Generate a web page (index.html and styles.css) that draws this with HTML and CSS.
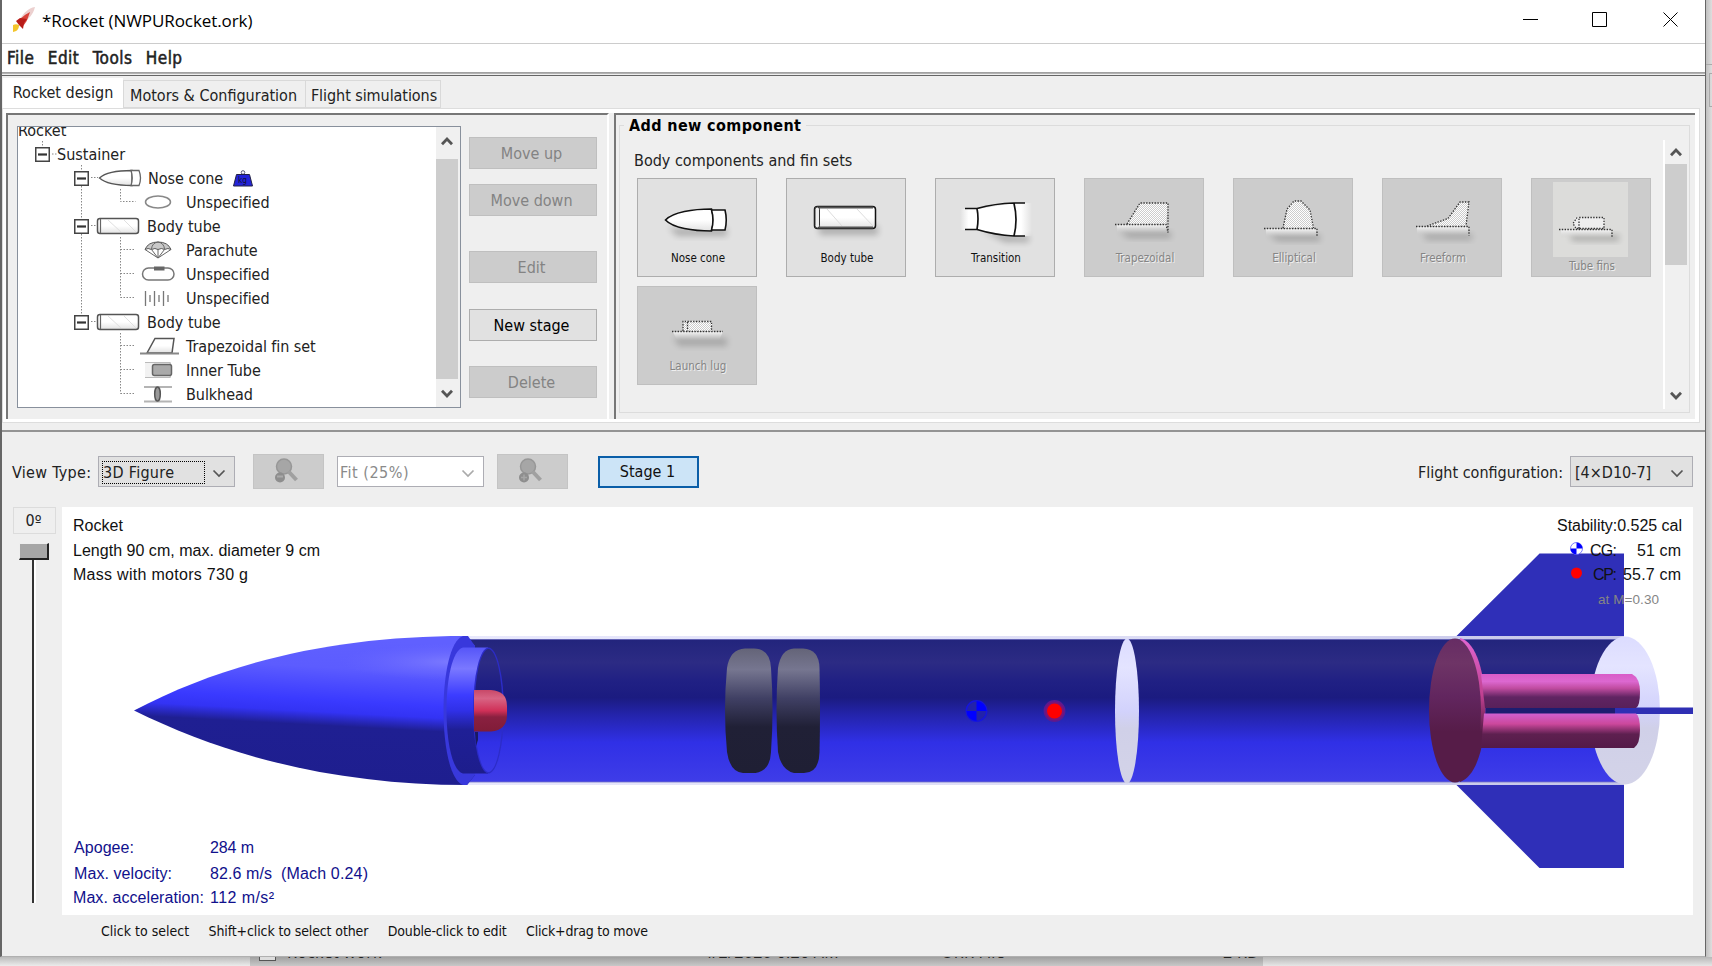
FILE: index.html
```html
<!DOCTYPE html>
<html lang="en">
<head>
<meta charset="utf-8">
<title>*Rocket (NWPURocket.ork)</title>
<link rel="stylesheet" href="styles.css">
</head>
<body>
<svg class="defs" width="0" height="0">
  <defs>
    <linearGradient id="metal" x1="0" y1="0" x2="0" y2="1"><stop offset="0" stop-color="#fff"/><stop offset=".5" stop-color="#fff"/><stop offset="1" stop-color="#e2e2e2"/></linearGradient>
    <pattern id="dither" width="2" height="2" patternUnits="userSpaceOnUse"><rect width="2" height="2" fill="#cccccc"/><rect width="1" height="1" fill="#fff"/><rect x="1" y="1" width="1" height="1" fill="#fff"/></pattern>
    <linearGradient id="base" x1="0" y1="0" x2="0" y2="1"><stop offset="0" stop-color="#f4f4f4"/><stop offset="1" stop-color="#ccc" stop-opacity="0"/></linearGradient>
    <linearGradient id="edgeFade" x1="0" y1="0" x2="1" y2="0"><stop offset="0" stop-color="#fff" stop-opacity="0"/><stop offset=".12" stop-color="#fff"/><stop offset=".85" stop-color="#fff"/><stop offset="1" stop-color="#fff" stop-opacity="0"/></linearGradient>
    <filter id="soft" x="-30%" y="-60%" width="160%" height="220%"><feGaussianBlur stdDeviation="3"/></filter>
    <symbol id="tube" viewBox="0 0 44 18"><rect x="1.500" y="1.500" width="41" height="15" rx="2.500" fill="url(#metal)" stroke="#555" stroke-width="1.500"/><path d="M12 3l13 12M28 3l12 12" stroke="#e0e0e0" fill="none"/><path d="M4.500 2v14" fill="none" stroke="#666" stroke-width="1.200"/></symbol>
    <symbol id="minus" viewBox="0 0 15 15"><rect x=".75" y=".75" width="13.500" height="13.500" fill="#fff" stroke="#444" stroke-width="1.500"/><path d="M3 7.500h9" stroke="#333" stroke-width="2.200"/></symbol>
    <symbol id="up" viewBox="0 0 12 10"><path d="M1 8.200L6 3l5 5.200" fill="none" stroke="#555" stroke-width="2.800"/></symbol>
    <symbol id="down" viewBox="0 0 12 10"><path d="M1 1.800L6 7l5-5.200" fill="none" stroke="#555" stroke-width="2.800"/></symbol>
    <symbol id="chev" viewBox="0 0 14 9"><path d="M1.500 1.500L7 7l5.500-5.500" fill="none" stroke="currentColor" stroke-width="1.700"/></symbol>
  </defs>
</svg>

<div class="desktop">
<div class="top">
<div class="window">
  <header class="titlebar">
    <svg class="app-icon" width="24" height="26" viewBox="0 0 24 26">
      <path d="M23 0C16 1 12 6 8 12l4 4c5-5 9-8 11-16z" fill="#ecd0cf"/><path d="M18 5C12 8 9 11 6 15l4 5c4-4 5-6 8-15z" fill="#d8433a"/><path d="M8 11l-4 3 3 4 4 4 1-6 3-4z" fill="#b81c18"/><path d="M1 18c2-1 4-1 6 0 0 3-1 6-6 7z" fill="#f3c52c"/>
    </svg>
    <span class="title">*Rocket (NWPURocket.ork)</span>
    <svg class="wincontrols" width="156" height="16" viewBox="0 0 156 16"><path d="M0 7.500h15M69.500 .5h14v14h-14zM140.500 .5l14 14M154.500 .5l-14 14" fill="none" stroke="#000"/></svg>
  </header>
  <nav class="menubar"><span>File</span><span>Edit</span><span>Tools</span><span>Help</span></nav>

  <section class="upper">
    <div class="tabs"><span class="tab active">Rocket design</span><span class="tab t2">Motors &amp; Configuration</span><span class="tab t3">Flight simulations</span></div>
    <div class="design">
      <div class="pane left">
        <div class="tree">
          <svg class="lines" width="120" height="280" viewBox="0 0 120 280"><path d="M23.500 14v6M33 27h6M62.500 38v5M62.500 59v32M62.500 107v80M72 50.500h7M72 98.500h7M72 194.500h7M101.500 62v12.500h15M101.500 110v60.500M101.500 122.500h15M101.500 146.500h15M101.500 170.500h15M101.500 206v60.500M101.500 218.500h15M101.500 242.500h15M101.500 266.500h15" fill="none" stroke="#888" stroke-dasharray="1.500 1.500"/></svg>
          <div class="rows">
            <div class="row r0">Rocket</div>
            <div class="row r1"><svg width="15" height="15"><use href="#minus"/></svg><span>Sustainer</span></div>
            <div class="row r2"><svg width="15" height="15"><use href="#minus"/></svg><svg class="bic" width="44" height="18" viewBox="0 0 44 18"><path d="M1.500 9C8 3 20 1.500 34 1.500v15C20 16.500 8 15 1.500 9z" fill="url(#metal)" stroke="#555" stroke-width="1.400"/><path d="M33 1.500q2.500 7.500 0 15h8q3-7.500 0-15z" fill="#fff" stroke="#666" stroke-width="1.300"/></svg><span>Nose cone</span>
              <svg class="kg" width="20" height="17" viewBox="0 0 20 17"><circle cx="10" cy="2.500" r="1.800" fill="none" stroke="#557"/><path d="M3.500 4.500h13l3 11.500H.5z" fill="#2424d8" stroke="#224"/><text x="5" y="13" class="kgt">kg</text></svg></div>
            <div class="row leaf"><svg width="42" height="18" viewBox="0 0 42 18"><ellipse cx="18" cy="9" rx="12.500" ry="6" fill="#fff" stroke="#888" stroke-width="1.500"/></svg><span>Unspecified</span></div>
            <div class="row r2 bt"><svg width="15" height="15"><use href="#minus"/></svg><svg class="bic" width="44" height="18"><use href="#tube"/></svg><span>Body tube</span></div>
            <div class="row leaf"><svg width="42" height="18" viewBox="0 0 42 18"><path d="M5 8.500Q8 1 18 1t13 7.500q-3-2-6.500 0-3-2-6.500 0-3-2-6.500 0Q8 6.500 5 8.500z" fill="#c8c8c8" stroke="#555"/><path d="M5 8.500l13 8.500 13-8.500M11.500 8.500L18 17l6.500-8.500M18 8.500V17M11.500 8Q12 2 18 1q6 1 6.500 7" fill="none" stroke="#666"/></svg><span>Parachute</span></div>
            <div class="row leaf"><svg width="42" height="18" viewBox="0 0 42 18"><rect x="2.500" y="3" width="31.500" height="12" rx="6" fill="#fff" stroke="#777" stroke-width="1.500"/><rect x="14" y="1.500" width="10.500" height="4" fill="#666"/></svg><span>Unspecified</span></div>
            <div class="row leaf"><svg width="42" height="18" viewBox="0 0 42 18"><path d="M5.500 2v15M14.500 2v15M23.500 2v15M10 6v7M19 6v7M28 6v7" stroke="#777" stroke-width="1.300"/></svg><span>Unspecified</span></div>
            <div class="row r2 bt"><svg width="15" height="15"><use href="#minus"/></svg><svg class="bic" width="44" height="18"><use href="#tube"/></svg><span>Body tube</span></div>
            <div class="row leaf"><svg width="42" height="18" viewBox="0 0 42 18"><path d="M7 16L15 1.500h19L32 16z" fill="url(#metal)" stroke="#555" stroke-width="1.500"/><path d="M0 16.500h39" stroke="#888" stroke-width="1.800"/></svg><span>Trapezoidal fin set</span></div>
            <div class="row leaf"><svg width="42" height="18" viewBox="0 0 42 18"><path d="M5 1.500h25q3 7.500 0 15H5" fill="#f2f2f2" stroke="#bbb" stroke-width="1.200"/><rect x="12.500" y="3.500" width="19" height="11" rx="2" fill="#aaa" stroke="#666" stroke-width="1.500"/></svg><span>Inner Tube</span></div>
            <div class="row leaf"><svg width="42" height="18" viewBox="0 0 42 18"><path d="M4 2h28M4 16.500h28" stroke="#b4b4b4" stroke-width="1.800"/><ellipse cx="17.500" cy="9" rx="2.800" ry="7" fill="#999" stroke="#555" stroke-width="1.500"/></svg><span>Bulkhead</span></div>
          </div>
          <div class="scroll"><svg width="12" height="10"><use href="#up"/></svg><i></i><svg width="12" height="10"><use href="#down"/></svg></div>
        </div>
        <div class="btns"><button class="btn off b1">Move up</button><button class="btn off b2">Move down</button><button class="btn off b3">Edit</button><button class="btn b4">New stage</button><button class="btn off b5">Delete</button></div>
      </div>
      <div class="pane right">
        <div class="group">
          <span class="legend">Add new component</span>
          <div class="components">
            <p class="subhead">Body components and fin sets</p>
            <div class="cards">
              <div class="card"><svg width="118" height="70" viewBox="1 1 118 70"><path d="M32 50h58v8H40z" fill="#000" opacity=".22" filter="url(#soft)"/><path d="M28.500 42C36 34 56 31 74.500 31q3.500 11 0 22C56 53 36 50 28.500 42z" fill="url(#metal)" stroke="#111" stroke-width="1.600"/><path d="M74.500 32h13.500q2.500 10 0 20H74.500q3-10 0-20z" fill="#fff" stroke="#111" stroke-width="1.600"/></svg><span>Nose cone</span></div>
              <div class="card"><svg width="118" height="70" viewBox="1 1 118 70"><path d="M32 48h60v9H34z" fill="#000" opacity=".22" filter="url(#soft)"/><rect x="28.500" y="28.500" width="61" height="22" rx="3" fill="url(#metal)" stroke="#111" stroke-width="1.500"/><path d="M31 29.500h56M31 49.500h56" stroke="#555" stroke-width="2"/><rect x="29" y="29" width="4.500" height="21" rx="2.200" fill="#eee" stroke="#333"/><path d="M41 31l15 17M71 31l16 17" stroke="#ddd"/></svg><span>Body tube</span></div>
              <div class="card"><svg width="118" height="70" viewBox="1 1 118 70"><path d="M46 52l34 6h14v6H70z" fill="#000" opacity=".24" filter="url(#soft)"/><path d="M25 31h18l36-6h18v33H79l-36-6H25z" fill="url(#edgeFade)"/><path d="M30 30.500h12Q60 25.500 79 25h11M30 51.500h12Q60 57 79 58h11M42 30.500q2 10 0 21M79 25.500q4 16 0 32.500" fill="none" stroke="#111" stroke-width="1.700"/></svg><span>Transition</span></div>
              <div class="card dis"><svg width="118" height="70" viewBox="1 1 118 70"><path d="M35 54h52v6H45z" fill="#000" opacity=".2" filter="url(#soft)"/><path d="M33 47h50v8H33z" fill="url(#base)"/><path d="M43 46L56 25h28l-2 21z" fill="url(#dither)"/><path d="M31 46.500h51l2 8V25H56L43 46" class="dots"/></svg><span>Trapezoidal</span></div>
              <div class="card dis"><svg width="118" height="70" viewBox="1 1 118 70"><path d="M35 57h52v6H45z" fill="#000" opacity=".2" filter="url(#soft)"/><path d="M33 51h50v8H33z" fill="url(#base)"/><path d="M50 50l4-19 7-8h7l9 9 3.500 18z" fill="url(#dither)"/><path d="M31 50.500h53v8M50 50l4-19 7-8h7l9 9 3.500 18" class="dots"/></svg><span>Elliptical</span></div>
              <div class="card dis"><svg width="118" height="70" viewBox="1 1 118 70"><path d="M40 56h50v6H45z" fill="#000" opacity=".18" filter="url(#soft)"/><path d="M35 49h51v8H35z" fill="url(#base)"/><path d="M45 48l21-7.500L78 24h10l-4 24z" fill="url(#dither)"/><path d="M34 48.500h53v9M45 48l21-7.500L78 24h9l-3 24" class="dots"/></svg><span>Freeform</span></div>
              <div class="card dis low"><svg width="118" height="78" viewBox="1 1 118 78"><rect x="22" y="4" width="75" height="75" fill="#dcdcda"/><path d="M38 57h50v6H42z" fill="#000" opacity=".22" filter="url(#soft)"/><path d="M30 52h50v8H30z" fill="url(#base)"/><rect x="43" y="39.500" width="30" height="11" rx="2" fill="#eee"/><path d="M28 51.500h53v8M48 50.500V39.500h25v11H45l-3-5 4-6" class="dots"/></svg><span>Tube fins</span></div>
              <div class="card dis"><svg width="118" height="70" viewBox="1 1 118 70"><path d="M36 52h54v8H42z" fill="#000" opacity=".18" filter="url(#soft)"/><path d="M36 46h50l-4 8H40z" fill="url(#base)"/><rect x="46" y="35" width="29" height="10" fill="url(#dither)"/><path d="M35 45.500h51M46 45V35.500h28.500V45M50.500 36v9" class="dots"/></svg><span>Launch lug</span></div>
            </div>
          </div>
          <div class="scroll s2"><svg width="12" height="10"><use href="#up"/></svg><i></i><svg width="12" height="10"><use href="#down"/></svg></div>
        </div>
      </div>
    </div>
  </section>

  <section class="lower">
    <div class="controls">
      <label class="vt">View Type:</label>
      <div class="combo c1"><span class="focus">3D Figure</span><svg width="14" height="9"><use href="#chev"/></svg></div>
      <div class="zoom z1"><svg width="26" height="25" viewBox="0 0 26 25"><circle cx="10" cy="8.500" r="7.500" fill="#a6a6a6" stroke="#979797" stroke-width="1.500"/><path d="M14.500 13.500l8 8.500" stroke="#a0a0a0" stroke-width="4"/><circle cx="6" cy="19.500" r="5" fill="#8e8e8e"/><path d="M3 18.500h6" stroke="#aaa" stroke-width="2"/></svg></div>
      <div class="combo c2"><span>Fit (25%)</span><svg width="14" height="9"><use href="#chev"/></svg></div>
      <div class="zoom z2"><svg width="26" height="25" viewBox="0 0 26 25"><circle cx="10" cy="8.500" r="7.500" fill="#a6a6a6" stroke="#979797" stroke-width="1.500"/><path d="M14.500 13.500l8 8.500" stroke="#a0a0a0" stroke-width="4"/><circle cx="6" cy="19.500" r="5" fill="#8e8e8e"/><path d="M3 19.500h6M6 16.500v6" stroke="#a6a6a6" stroke-width="1.500"/></svg></div>
      <button class="stage">Stage 1</button>
      <label class="fc">Flight configuration:</label>
      <div class="combo c3"><span>[4×D10-7]</span><svg width="14" height="9"><use href="#chev"/></svg></div>
    </div>
    <div class="view">
      <div class="slider"><span class="deg">0º</span><div class="knob"></div><div class="track"></div></div>
      <svg class="canvas" width="1631" height="408" viewBox="62 507 1631 408">
        <defs>
          <linearGradient id="body" gradientUnits="userSpaceOnUse" x1="0" y1="638" x2="0" y2="783"><stop offset="0" stop-color="#22247c"/><stop offset=".17" stop-color="#2c2b84"/><stop offset=".3" stop-color="#202084"/><stop offset=".41" stop-color="#1b1b80"/><stop offset=".52" stop-color="#2323a8"/><stop offset=".72" stop-color="#3030e6"/><stop offset="1" stop-color="#3f3de8"/></linearGradient>
          <linearGradient id="nose" gradientUnits="userSpaceOnUse" x1="300" y1="636" x2="292" y2="785"><stop offset="0" stop-color="#6060ff"/><stop offset=".2" stop-color="#5c5cff"/><stop offset=".42" stop-color="#3a3aff"/><stop offset=".5" stop-color="#3333f4"/><stop offset=".59" stop-color="#1f1f92"/><stop offset="1" stop-color="#1e1e8e"/></linearGradient>
          <linearGradient id="cyl" gradientUnits="userSpaceOnUse" x1="0" y1="647" x2="0" y2="774"><stop offset="0" stop-color="#5555f8"/><stop offset=".17" stop-color="#7a78ff"/><stop offset=".38" stop-color="#3c3cff"/><stop offset=".5" stop-color="#3030e8"/><stop offset=".65" stop-color="#1f1f96"/><stop offset="1" stop-color="#1d1d8c"/></linearGradient>
          <radialGradient id="shine" gradientUnits="userSpaceOnUse" cx="455" cy="662" r="115" gradientTransform="translate(0 556) scale(1 .16)"><stop offset="0" stop-color="#8280ff" stop-opacity=".85"/><stop offset="1" stop-color="#6a68ff" stop-opacity="0"/></radialGradient>
          <linearGradient id="red" x1="0" y1="0" x2="0" y2="1"><stop offset="0" stop-color="#c84868"/><stop offset=".2" stop-color="#d86484"/><stop offset=".5" stop-color="#d03058"/><stop offset=".65" stop-color="#8a2040"/><stop offset="1" stop-color="#801c38"/></linearGradient>
          <linearGradient id="pack" x1="0" y1="0" x2="0" y2="1"><stop offset="0" stop-color="#646478"/><stop offset=".17" stop-color="#767690"/><stop offset=".4" stop-color="#404064"/><stop offset=".63" stop-color="#202036"/><stop offset="1" stop-color="#1f1f34"/></linearGradient>
          <linearGradient id="white" x1="0" y1="0" x2="0" y2="1"><stop offset="0" stop-color="#dcdcff"/><stop offset=".2" stop-color="#e4e4ff"/><stop offset=".5" stop-color="#d2d2fc"/><stop offset=".62" stop-color="#d0d0e8"/><stop offset="1" stop-color="#d3d3e8"/></linearGradient>
          <linearGradient id="disc" x1="0" y1="0" x2="0" y2="1"><stop offset="0" stop-color="#662c64"/><stop offset=".17" stop-color="#6e3466"/><stop offset=".4" stop-color="#62265f"/><stop offset=".65" stop-color="#561c48"/><stop offset="1" stop-color="#561c48"/></linearGradient>
          <linearGradient id="motor1" x1="0" y1="0" x2="0" y2="1"><stop offset="0" stop-color="#d85cc8"/><stop offset=".22" stop-color="#dc68d0"/><stop offset=".42" stop-color="#c04ca0"/><stop offset=".68" stop-color="#602462"/><stop offset="1" stop-color="#58205a"/></linearGradient>
          <linearGradient id="motor2" x1="0" y1="0" x2="0" y2="1"><stop offset="0" stop-color="#d060d0"/><stop offset=".3" stop-color="#cc489c"/><stop offset=".6" stop-color="#5e2050"/><stop offset="1" stop-color="#541a48"/></linearGradient>
          <linearGradient id="rim" x1="0" y1="0" x2="0" y2="1"><stop offset="0" stop-color="#e066d0"/><stop offset=".4" stop-color="#c04090"/><stop offset=".65" stop-color="#561c48"/></linearGradient>
          <linearGradient id="edge" x1="0" y1="0" x2="1" y2="0"><stop offset="0" stop-color="#e8e8fc"/><stop offset=".6" stop-color="#dcdcf4"/><stop offset="1" stop-color="#c4c4e8"/></linearGradient>
        </defs>
        <path d="M1455 637.500L1539.500 553.500H1624V637zM1455 783.500L1539.500 868H1624V784z" fill="#2f2fb8"/>
        <rect x="466" y="636" width="1158" height="3.500" fill="url(#edge)"/>
        <rect x="466" y="781.500" width="1158" height="3.500" fill="url(#edge)"/>
        <rect x="466" y="639" width="1158" height="143" fill="url(#body)"/>
        <path d="M466 639.500H1624M466 782H1624" stroke="#7474c4" stroke-width=".8"/>
        <ellipse cx="1625" cy="710.500" rx="35" ry="74" fill="url(#white)"/>
        <path d="M134 710.500C230 660 340 636 465 636L475 646V775L467 785C340 785 230 758 134 710.500z" fill="url(#nose)"/>
        <path d="M330 646Q400 638 463 638L450 690H330z" fill="url(#shine)"/>
        <path d="M463 636C437 645 437 776 463 785H467L475 775V646L468 636z" fill="#3838dc"/>
        <path d="M463 647.500H488V773.500H463C441 768 441 653 463 647.500z" fill="url(#cyl)"/>
        <ellipse cx="488.500" cy="710.500" rx="15.500" ry="63" fill="#2c2cc8"/>
        <ellipse cx="488.500" cy="710.500" rx="14" ry="61.500" fill="url(#body)"/>
        <path d="M474 690h17q16 1 16 16v9q0 15-16 16.500h-17z" fill="url(#red)"/>
        <path d="M475 732h3v8l-2 6z" fill="#1a1a60"/>
        <path d="M727 668Q730 649 745 648.500h9Q770 649 771 668Q774 710 771 752Q770 773 752 773h-9Q730 772 727 752Q723 710 727 668z" fill="url(#pack)"/>
        <path d="M778 668Q781 649 794 648.500h9Q819 649 819.500 668Q820.500 710 819.500 752Q819 773 804 773h-10Q781 770 778 752Q775 710 778 668z" fill="url(#pack)"/>
        <circle cx="976.500" cy="711" r="10.200" fill="#2222aa" stroke="#1616dc" stroke-width="1.500"/><path d="M976.500 711V701a10 10 0 0 1 10 10zM976.500 711V721a10 10 0 0 1-10-10z" fill="#0000ff"/>
        <circle cx="1054.500" cy="711" r="10.200" fill="#7a1478" stroke="#5c1a90" stroke-width="1.500"/><circle cx="1054.500" cy="711" r="7.500" fill="#f00"/>
        <ellipse cx="1127" cy="711" rx="12" ry="72.500" fill="url(#white)"/>
        <path d="M1460 638C1493 645 1495 770 1460 782z" fill="url(#rim)"/>
        <ellipse cx="1455" cy="710.500" rx="26" ry="72" fill="url(#disc)"/>
        <rect x="1486" y="707.500" width="130" height="7" fill="#1d1d70"/><rect x="1615" y="707.500" width="78" height="6.500" fill="#2f2fb4"/>
        <path d="M1481 674H1632Q1640 678 1640 692Q1640 706 1636 708H1485z" fill="url(#motor1)"/>
        <path d="M1484 713.500H1636Q1640 716 1640 730Q1640 744 1634 748H1481z" fill="url(#motor2)"/>
        <g class="info">
          <text x="73" y="530.500" textLength="50">Rocket</text><text x="73" y="556" textLength="247">Length 90 cm, max. diameter 9 cm</text><text x="73" y="580" textLength="175">Mass with motors 730 g</text>
          <text x="1557" y="530.500" textLength="125">Stability:0.525 cal</text><text x="1590" y="556" textLength="27">CG:</text><text x="1637" y="556" textLength="44">51 cm</text><text x="1593" y="580" textLength="24">CP:</text><text x="1623" y="580" textLength="58">55.7 cm</text>
          <text x="1598" y="604" textLength="61" class="mach">at M=0.30</text>
          <g class="navy"><text x="74" y="853" textLength="60">Apogee:</text><text x="210" y="853" textLength="44">284 m</text><text x="74" y="879" textLength="98">Max. velocity:</text><text x="210" y="879" textLength="62">82.6 m/s</text><text x="281" y="879" textLength="87">(Mach 0.24)</text><text x="73" y="903" textLength="131">Max. acceleration:</text><text x="210" y="903" textLength="64">112 m/s²</text></g>
        </g>
        <circle cx="1576.500" cy="548.500" r="6" fill="#fff" stroke="#5a5aff" stroke-width=".8"/><path d="M1576.500 548.500V542.500a6 6 0 0 1 6 6zM1576.500 548.500V554.500a6 6 0 0 1-6-6z" fill="#0000ff"/>
        <circle cx="1576.500" cy="573" r="5.500" fill="#f00"/>
      </svg>
    </div>
    <footer class="hints"><span>Click to select</span><span class="k2">Shift+click to select other</span><span class="k3">Double-click to edit</span><span class="k4">Click+drag to move</span></footer>
  </section>
</div>
<aside class="behind"><i class="h1"></i><i class="h2"></i></aside>
</div>
<div class="explorer"><div class="nav"></div><div class="file"><i class="page"></i><span class="f1">Rocket work</span><span class="f2">4/2/2020 6:26 AM</span><span class="f3">ORK File</span><span class="f4">2 KB</span></div></div>
</div>
</body>
</html>
```
FILE: styles.css
```css
* { box-sizing: border-box; }
body { margin: 0; overflow: hidden; background: #e6e6e6; font-family: "DejaVu Sans Condensed", "DejaVu Sans", sans-serif; font-stretch: condensed; font-size: 16px; color: #222; }
button { font: inherit; padding: 0; border-radius: 0; }
.defs { position: absolute; }
.desktop { width: 1712px; height: 966px; display: flex; flex-direction: column; overflow: hidden; }
.top { display: flex; height: 957px; }
.window { width: 1706px; height: 957px; display: flex; flex-direction: column; background: #efefef; border-left: 2px solid #666; border-right: 1px solid #666; border-bottom: 1px solid #b0b0b0; }
.behind { width: 6px; background: linear-gradient(90deg, #c0c0c0, #dedede); padding-top: 64px; }
.behind i { display: block; border-top: 1px solid #aaa; height: 9px; }
.behind .h2 { height: 34px; border-bottom: 1px solid #aaa; border-left: 1px solid #aaa; margin-left: 3px; }

.titlebar { height: 43px; background: #fff; display: flex; align-items: center; padding: 0 26px 4px 10px; flex: none; }
.app-icon { margin-right: 6px; }
.title { font-family: "Open Sans", sans-serif; font-stretch: normal; font-size: 17px; letter-spacing: -0.08px; color: #000; padding-top: 1px; }
.wincontrols { margin-left: auto; }
.menubar { height: 33px; flex: none; background: linear-gradient(#fff 28px, #999 28px, #bbb 30px, #eee 30px, #eee 31px, #666 31px); border-top: 1px solid #ccc; display: flex; gap: 13.5px; padding: 3px 0 0 5px; font-size: 17px; letter-spacing: .45px; line-height: 22px; color: #222; -webkit-text-stroke: .5px #222; }

.upper { height: 354px; flex: none; padding-right: 5px; }
.tabs { height: 32px; display: flex; align-items: flex-end; padding-left: 1px; }
.tab { height: 28px; border: 1px solid #d9d9d9; line-height: 30px; white-space: nowrap; text-align: center; }
.tab.active { width: 120px; height: 30px; background: #fff; border: 0; line-height: 29px; }
.t2 { width: 182px; border-right: 0; padding-right: 2px; }
.t3 { width: 136px; padding-left: 2px; letter-spacing: -.06px; }
.design { height: 315px; display: flex; border: 5px solid #fff; border-left-width: 4px; border-bottom-width: 4px; outline: 1px solid #ddd; outline-offset: -1px; }
.pane { height: 306px; border-top: 2px solid #777; border-left: 2px solid #777; }
.left { width: 606px; display: flex; padding: 11px 0 0 9px; border-right: 2px solid #fff; }
.tree { width: 444px; height: 282px; border: 1px solid #88909c; background: #fff; display: flex; justify-content: space-between; position: relative; overflow: hidden; }
.lines { position: absolute; left: 1px; top: 0; }
.rows { position: relative; margin-top: -9px; padding-left: 1px; }
.r0 { margin-left: -1px; }
.row { height: 24px; display: flex; align-items: center; white-space: nowrap; }
.r1 { padding-left: 16px; }
.r1 span { margin-left: 7px; }
.r2 { padding-left: 55px; }
.bic { margin-left: 9px; }
.r2 span { margin-left: 6px; }
.bt .bic { margin-left: 7px; }
.bt span { margin-left: 7px; }
.kg { margin-left: 10px; }
.kgt { font-size: 8px; fill: #113; }
.leaf { padding-left: 121px; }
.leaf span { margin-left: 4px; letter-spacing: -.06px; }
.scroll { width: 24px; background: #f0f0f0; display: flex; flex-direction: column; align-items: center; justify-content: space-between; padding: 9px 2px 8px 0; }
.scroll i { width: 22px; height: 220px; background: #cdcdcd; position: relative; top: 1.5px; }
.btns { margin-left: 8px; padding-top: 11px; display: flex; flex-direction: column; }
.btn { width: 128px; height: 32px; border: 1px solid #adadad; background: #e1e1e1; color: #000; padding-right: 3px; }
.btn.off { background: #ccc; border-color: #bfbfbf; color: #838383; }
.b2 { margin-top: 15px; } .b3 { margin-top: 35px; } .b4 { margin-top: 26px; } .b5 { margin-top: 25px; }
.right { flex: 1; margin-left: 5px; padding: 10px 5px 0 3px; }
.group { height: 288px; border: 1px solid #dcdcdc; display: flex; padding-top: 14px; position: relative; }
.legend { position: absolute; left: 4px; top: -10px; background: #efefef; padding: 0 5px; font-weight: bold; letter-spacing: .38px; line-height: 20px; color: #000; }
.components { width: 1043px; padding-left: 17px; }
.subhead { margin: 11px 0 7px -3px; line-height: 20px; height: 20px; }
.cards { display: grid; grid-template-columns: repeat(7, 120px); column-gap: 29px; row-gap: 9px; }
.card { height: 99px; border: 1px solid #adadad; background: #e1e1e1; display: flex; flex-direction: column; align-items: center; font-size: 11.5px; color: #111; line-height: 18px; }
.card.dis { background: #ccc; border-color: #bfbfbf; color: #858585; text-shadow: 1px 1px 0 #efefef; }
.card span { margin-left: 2px; }
.dots { fill: none; stroke: #333; stroke-width: 1.3; stroke-dasharray: 1.4 1.4; }
.s2 { border-left: 2px solid #fff; height: 269px; width: 26px; padding: 7px 2px 8px 0; }
.s2 i { height: 101px; margin-top: 5px; margin-bottom: auto; }
.scroll svg { flex: none; }

.lower { flex: 1; border-top: 2px solid #949494; padding: 22px 12px 0 8px; display: flex; flex-direction: column; }
.controls { height: 35px; display: flex; align-items: center; margin-left: 2px; }
.vt { width: 86px; white-space: nowrap; letter-spacing: .3px; padding-top: 2px; }
.combo { height: 31px; border: 1px solid #adadb4; background: #e1e1e1; display: flex; align-items: center; justify-content: space-between; padding: 1px 8px 0 4px; color: #555; white-space: nowrap; }
.combo span { color: #222; }
.combo svg { margin-top: 3px; }
.c1 { width: 137px; padding-left: 3px; }
.c1 .focus { width: 103px; height: 23px; border: 1px dotted #000; line-height: 22px; letter-spacing: .3px; }
.c2 { width: 147px; background: #fff; color: #aaa; margin-left: 13px; padding-left: 2px; }
.c2 span { color: #8a8a8a; letter-spacing: .5px; }
.zoom { width: 71px; height: 35px; background: #ccc; border: 1px solid #c4c4c4; display: flex; align-items: center; justify-content: center; padding: 0 3px 2px 0; }
.z1 { margin-left: 18px; } .z2 { margin-left: 13px; }
.stage { margin-left: 30px; width: 101px; height: 32px; border: 2px solid #0a5ea8; background: #cce4f7; color: #111; padding-right: 2px; }
.fc { margin-left: auto; margin-right: 7px; padding-top: 2px; }
.c3 { width: 123px; }
.view { margin-top: 18px; display: flex; height: 408px; }
.slider { width: 52px; display: flex; flex-direction: column; align-items: flex-start; padding-left: 3px; }
.deg { width: 43px; height: 27px; border: 1px solid #dcdcdc; text-align: center; line-height: 25px; padding-right: 2px; }
.knob { margin: 9px 0 0 6px; width: 30px; height: 17px; background: #a6a6a6; border: solid; border-width: 1px 2px 2px 1px; border-color: #eee #222 #222 #eee; }
.track { margin-left: 19px; width: 4px; height: 343px; border-left: 2px solid #333; background: #fff; }
.canvas { background: #fff; display: block; }
.info { font-family: "Liberation Sans", Arial, sans-serif; font-stretch: normal; font-size: 16px; fill: #111; }
.mach { font-size: 13.500px; fill: #858585; }
.navy { fill: #10108c; }
.hints { display: flex; gap: 19.500px; font-size: 14px; padding: 8px 0 0 91px; line-height: 17px; color: #111; }
.k2 { letter-spacing: -.12px; } .k3 { letter-spacing: -.17px; } .k4 { letter-spacing: -.2px; }

.explorer { height: 9px; display: flex; background: linear-gradient(#b8b8b8, #e6e6e6); overflow: hidden; }
.nav { width: 250px; background: linear-gradient(#bbb, #ececec); }
.file { width: 1013px; background: linear-gradient(#a0a0a0, #c8c8c8); display: grid; grid-template-columns: 37px 416px 238px 282px 60px; font-family: "Open Sans", sans-serif; font-stretch: normal; font-size: 16px; line-height: 20px; color: #222; }
.file span { margin-top: -15px; height: 20px; white-space: nowrap; letter-spacing: .3px; }
.page { width: 17px; height: 16px; margin: -12px 0 0 9px; border: 1px solid #555; background: #ddd; }
```
